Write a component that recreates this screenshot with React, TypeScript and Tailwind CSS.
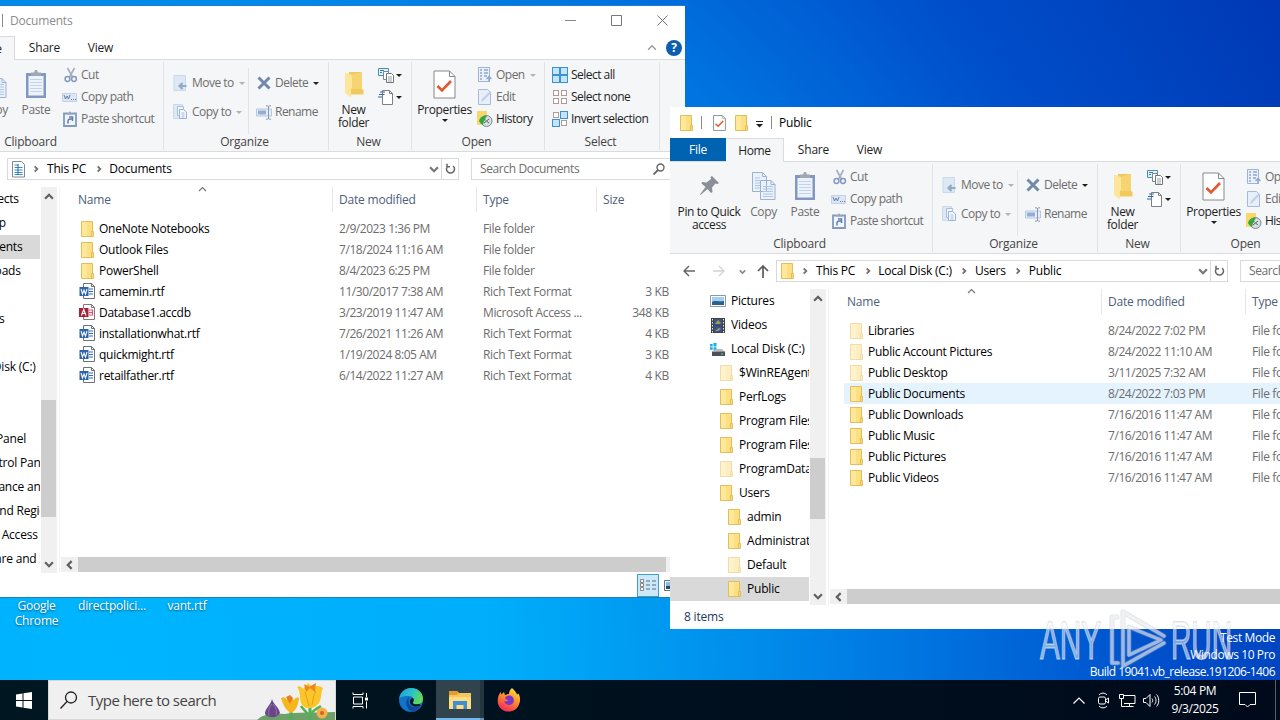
import React from "react";
import clsx from "clsx";

type TreeItem = { label: string; pad: string; icon?: "folder" | "faded" | "pictures" | "videos" | "disk"; selected?: boolean };
type FileItem = { name: string; date: string; type: string; size?: string; icon: "folder" | "faded" | "word" | "access"; hover?: boolean };

const Folder = ({ faded = false }: { faded?: boolean }) => (
  <svg width="13" height="16" viewBox="0 0 13 16" className="shrink-0" opacity={faded ? 0.5 : 1}>
    <path d="M.5.5h11v15H.5z" fill="#fbdf82" stroke="#e5bd55" />
    <path d="M1 1h5v14H1z" fill="#fee89c" />
    <path d="M10.500 10.500h2v5h-2z" fill="#f8d979" stroke="#e0b64c" strokeWidth=".8" />
  </svg>
);

const WordFile = () => (
  <svg width="17" height="17" viewBox="0 0 17 17" className="shrink-0">
    <path d="M4.500.5h8l3 3v12h-11z" fill="#fff" stroke="#6c7178" />
    <path d="M12.500.5v3h3" fill="none" stroke="#6c7178" />
    <path d="M10 6h4M10 8.500h4M10 11h4" stroke="#2b6cb8" />
    <path d="M.5 4h9v9h-9z" fill="#2a62ad" />
    <path d="m2 6 1.500 5L5 7l1.500 4L8 6" fill="none" stroke="#fff" strokeWidth="1.100" />
  </svg>
);

const AccessFile = () => (
  <svg width="17" height="17" viewBox="0 0 17 17" className="shrink-0">
    <path d="M4.500.5h8l3 3v12h-11z" fill="#fff" stroke="#8a7478" />
    <path d="M12.500.5v3h3" fill="none" stroke="#8a7478" />
    <path d="M10 6h3.500v5H10M10 8.500h3" fill="none" stroke="#e0526a" strokeWidth="1.200" />
    <path d="M0 4h9.500v9H0z" fill="#a9203a" />
    <path d="m2.500 11.500 2.200-6 2.300 6M3.300 9.500h3" fill="none" stroke="#fff" strokeWidth="1.200" />
  </svg>
);

const DocumentIcon = () => (
  <svg width="13" height="17" viewBox="0 0 13 17" className="shrink-0">
    <path d="M.5.500h9l3 3v12.500H.5z" fill="#fff" stroke="#7d8a94" />
    <path d="M2.500 4h4M2.500 6.500h8M2.500 9h8M2.500 11.500h8M2.500 13.500h8" stroke="#3a8bc9" strokeWidth="1.200" />
    <path d="M6 3v11" stroke="#1f6fae" />
  </svg>
);

const TreeIcon = ({ icon }: { icon?: TreeItem["icon"] }) => {
  if (icon === "pictures")
    return (
      <svg width="16" height="12" viewBox="0 0 16 12" className="shrink-0">
        <path d="M.5.5h15v11H.5z" fill="#fff" stroke="#8b9aa6" />
        <path d="M2 2h12v8H2z" fill="#9fd1f5" />
        <path d="M2 7c3-2 5 0 12-1v4H2z" fill="#2f6188" />
      </svg>
    );
  if (icon === "videos")
    return (
      <svg width="14" height="15" viewBox="0 0 14 15" className="shrink-0">
        <path d="M0 0h14v15H0z" fill="#3f4246" />
        <path d="M3 1h8v6H3z" fill="#44528c" />
        <path d="M3 8h8v6H3z" fill="#385090" />
        <path d="m4 6 3-4 3 3-2 1zM4 13l4-3 2 1-3 2z" fill="#98a14e" />
        <path d="M1.500 1v14M12.500 1v14" stroke="#e7e7e7" strokeDasharray="1.500 1.500" />
      </svg>
    );
  if (icon === "disk")
    return (
      <svg width="15" height="13" viewBox="0 0 15 13" className="mr-px shrink-0">
        <path d="M0 1h2.700v2.500H0zM3.500 0h3v3.500h-3zM0 4.300h2.700v2.500H0zM3.500 4.300h3v3h-3z" fill="#19b1dc" />
        <path d="m3 8 3-2h6l3 3z" fill="#b9bdc0" />
        <path d="M2 8.500h13V13H2z" fill="#4c5257" />
        <path d="M11 11h2" stroke="#67e07a" />
      </svg>
    );
  return (
    <span className="pl-px">
      <Folder faded={icon === "faded"} />
    </span>
  );
};

const Caret = ({ muted = false }: { muted?: boolean }) => (
  <svg width="6" height="3" viewBox="0 0 6 3" className="shrink-0">
    <path d="M0 0h6L3 3z" fill={muted ? "#b0b3b8" : "#1e1e1e"} />
  </svg>
);

const Chevron = ({ dir, size = 8, color = "#606060", weight = 2 }: { dir: "up" | "down" | "left" | "right"; size?: number; color?: string; weight?: number }) => {
  const paths = { up: "m1 6 3.500-3.500L8 6", down: "m1 3 3.500 3.500L8 3", left: "M6 1 2.500 4.500 6 8", right: "m3 1.500 3 3-3 3" };
  return (
    <svg width={size} height={size} viewBox="0 0 9 9" className="shrink-0">
      <path d={paths[dir]} fill="none" stroke={color} strokeWidth={weight} />
    </svg>
  );
};

const PinIcon = () => (
  <svg width="22" height="22" viewBox="0 0 22 22">
    <path d="m14 1 7 7-1.500 1-2-.5-3.500 4 .5 4.500-1.500 1-3.500-4-7 6-.5-.5 5.500-7.500-4-3.500L4 7l4.500.5 4.500-3.500-.5-2z" fill="#8a8f96" />
  </svg>
);

const CopyIcon = () => (
  <svg width="24" height="28" viewBox="0 0 24 28">
    <path d="M.5.5h10l4 4v15H.5zM8.500 8.500h10.500l4 4v15H8.500z" fill="#e9f1fb" stroke="#9db1d0" />
    <path d="M3 6h5M3 8.500h5M3 11h5M3 13.500h5M3 16h5M11 14.500h10M11 17h10M11 19.500h10M11 22h10M11 24.500h10" stroke="#b0c4e4" />
    <path d="M10.500.5v4h4M19 8.500v4h4" fill="none" stroke="#9db1d0" />
  </svg>
);

const PasteIcon = () => (
  <svg width="22" height="30" viewBox="0 0 22 30">
    <path d="M1 4h20v25H1z" fill="#8298c0" />
    <path d="M3.500 7h15v19.500h-15z" fill="#edf3fc" />
    <path d="M5 10.500h12M5 13.500h12M5 16.500h12M5 19.500h12M5 22.500h12" stroke="#c4d3ea" />
    <path d="M6 3.500h3l1-2.500h2l1 2.500h3V7H6z" fill="#a1a8b3" />
  </svg>
);

const CutIcon = () => (
  <svg width="14" height="16" viewBox="0 0 14 16">
    <path d="m3.500 1 5 9M10.500 1l-5 9" stroke="#a3afc0" strokeWidth="1.600" />
    <circle cx="3.500" cy="12" r="2.400" fill="none" stroke="#8299c0" strokeWidth="1.500" />
    <circle cx="10" cy="12" r="2.400" fill="none" stroke="#8299c0" strokeWidth="1.500" />
  </svg>
);

const CopyPathIcon = () => (
  <svg width="15" height="9" viewBox="0 0 15 9">
    <path d="M.5.5h14v8H.5z" fill="#dbe7f6" stroke="#c2d1e8" />
    <path d="m2 2 1.500 4L5 3l1.500 3L8 2M9 6.500h1M11 6.500h1M13 6.500h1" fill="none" stroke="#6b7fa5" />
  </svg>
);

const ShortcutIcon = () => (
  <svg width="14" height="16" viewBox="0 0 14 16">
    <path d="M1 2.500h12V15H1z" fill="#f1f6fd" stroke="#8399bf" strokeWidth="1.800" />
    <path d="M4 3.500V2h2l.5-1.500h1L8 2h2v1.500z" fill="#98a3b5" />
    <path d="M5 12.500V10c0-1.500 1-2.300 4-2.300M6 6h3.500v4" fill="none" stroke="#5c7db4" strokeWidth="1.500" />
  </svg>
);

const MoveIcon = () => (
  <svg width="14" height="16" viewBox="0 0 14 16">
    <path d="M1 .5h11.500v15H1z" fill="#dde8f5" stroke="#cbd9ec" />
    <path d="M13.500 11H7M9.500 8l-3 3 3 3" fill="none" stroke="#90aac8" strokeWidth="2.200" />
  </svg>
);

const CopyToIcon = () => (
  <svg width="14" height="16" viewBox="0 0 14 16">
    <path d="M.5.5h9v14h-9z" fill="#dde8f5" stroke="#cbd9ec" />
    <path d="M4.500 2.500h6v9h-6z" fill="#eff5fd" stroke="#a9bedb" />
    <path d="M6.500 5.500h4l3 2.500v6.500h-7z" fill="#f3f8fe" stroke="#9ab2d4" />
    <path d="M8.500 9h3M8.500 11h3M8.500 13h3" stroke="#a9bedb" />
  </svg>
);

const DeleteIcon = () => (
  <svg width="14" height="14" viewBox="0 0 14 14">
    <path d="m1.500 1.500 11 11M12.500 1.500l-11 11" stroke="#7189ac" strokeWidth="3" />
  </svg>
);

const RenameIcon = () => (
  <svg width="17" height="15" viewBox="0 0 17 15">
    <path d="M.5 4h15v7H.5z" fill="#e5eef9" stroke="#b3c6e2" />
    <path d="M2 5.500h8v4H2z" fill="#95add2" />
    <path d="M12.500 1.500v12M10 .8c1.500 0 2.500.2 2.500 1 0-.8 1-1 2.500-1M10 14.200c1.500 0 2.500-.2 2.500-1 0 .8 1 1 2.500 1" fill="none" stroke="#8695ad" />
  </svg>
);

const NewFolderIcon = () => (
  <svg width="20" height="27" viewBox="0 0 20 27">
    <path d="M5 1h13v17l1.500 1v4.500H5z" fill="#f1ca5e" />
    <path d="M7 4v14h11V1z" fill="#f6d472" />
    <path d="M1 1.500 8 4v13l-1 1v8.500L1 22z" fill="#fde59a" />
  </svg>
);

const NewItemIcon = () => (
  <svg width="17" height="17" viewBox="0 0 17 17">
    <path d="M.5 1.500h10v7H.5z" fill="#dff1f7" stroke="#4a90a8" />
    <path d="M2 3.500h4M2 5.500h2" stroke="#3a7ab0" />
    <path d="M5.500 4.500h5v8h-5z" fill="#fff" stroke="#7c8890" />
    <path d="M8.500 6.500h5l2 2v7h-7z" fill="#fff" stroke="#6f767c" />
    <path d="M10 10h4M10 12h4M10 14h4" stroke="#9ba1a5" />
  </svg>
);

const EasyAccessIcon = () => (
  <svg width="17" height="17" viewBox="0 0 17 17">
    <path d="M4.500 1.500h7l3 3v11h-10z" fill="#fff" stroke="#7b8084" />
    <path d="M11.500 1.500v3h3" fill="none" stroke="#7b8084" />
    <path d="M2 3h5M1 5.500h5.500M0 8h4" stroke="#2f6aa5" strokeWidth="1.200" />
  </svg>
);

const PropertiesIcon = ({ small = false }: { small?: boolean }) => (
  <svg width={small ? 13 : 23} height={small ? 16 : 29} viewBox="0 0 23 29" preserveAspectRatio="none">
    <path d="M1 1h15.500L22 6.500V28H1z" fill="#fff" stroke="#85898d" strokeWidth={small ? 1.600 : 1} />
    <path d="M16.500 1v5.500H22" fill="none" stroke="#85898d" />
    <path d="m4.500 16 4.500 4.500L18 11" fill="none" stroke="#e4572e" strokeWidth="2.600" />
  </svg>
);

const OpenIcon = () => (
  <svg width="14" height="16" viewBox="0 0 14 16">
    <path d="M.5.5h11v14H.5z" fill="#eaf1fa" stroke="#9fb4d4" />
    <path d="M2 3h2M2 6h2M2 9h2M2 12h2M6 3h4M6 6h4M6 9h3" stroke="#8ea7cf" strokeWidth="1.500" />
    <path d="M11 15v-5M8.500 12 11 9.500l2.500 2.500" fill="none" stroke="#8fa9cd" strokeWidth="1.500" />
  </svg>
);

const EditIcon = () => (
  <svg width="14" height="16" viewBox="0 0 14 16">
    <path d="M.5.5h9l3 3v12H.5z" fill="#e7eff9" stroke="#a7bbd8" />
    <path d="m3 13 1-3 8-8 1.500 1.500-8 8z" fill="#bfd0e9" />
  </svg>
);

const HistoryIcon = () => (
  <svg width="17" height="16" viewBox="0 0 17 16">
    <path d="M1 0h10v13l-10 1z" fill="#f8d768" />
    <circle cx="10.500" cy="10" r="5.500" fill="#d9dee0" stroke="#7d8b8c" />
    <path d="M3 10c1-4 4-6 8-5l-2 3 1 1-2 1-1 4c-2-1-3-2-4-4" fill="#36a543" />
    <path d="m8 12 5-4M10.500 10l2.500 2" stroke="#566" />
  </svg>
);

const SelectIcon = ({ fill }: { fill: [boolean, boolean, boolean, boolean] }) => (
  <svg width="16" height="16" viewBox="0 0 16 16">
    {fill.map((on, i) => {
      const x = (i % 2) * 8;
      const y = i > 1 ? 8 : 0;
      return on ? (
        <rect key={i} x={x + 0.5} y={y + 0.5} width="7" height="7" fill="#c4e5fa" stroke="#3c93cf" />
      ) : (
        <rect key={i} x={x + 1.5} y={y + 1.5} width="5" height="5" fill="#fff" stroke="#b39c93" />
      );
    })}
  </svg>
);

const Small = ({ icon, label, muted, caret }: { icon: React.ReactNode; label: string; muted?: boolean; caret?: "dark" | "muted" }) => (
  <div className={clsx("flex h-[22px] items-center tracking-[-0.52px] whitespace-nowrap", muted ? "text-[#6d6d6d]" : "text-[#1e1e1e]")}>
    <span className="flex w-[19px] shrink-0 justify-start">{icon}</span>
    <span>{label}</span>
    {caret && (
      <span className="ml-[5px]">
        <Caret muted={caret === "muted"} />
      </span>
    )}
  </div>
);

const Big = ({ icon, lines, width, muted, caret }: { icon: React.ReactNode; lines: string[]; width: string; muted?: boolean; caret?: boolean }) => (
  <div className={clsx("flex shrink-0 flex-col items-center tracking-[-0.35px]", width, muted ? "text-[#6d6d6d]" : "text-[#1e1e1e]")}>
    <div className="flex h-[38px] items-center justify-center">{icon}</div>
    {lines.map((line) => (
      <span key={line} className="h-[13px] leading-[13px] whitespace-nowrap">
        {line}
      </span>
    ))}
    {caret && (
      <span className="mt-[3px] flex">
        <Caret />
      </span>
    )}
  </div>
);

const Group = ({ label, width, children }: { label: string; width: string; children: React.ReactNode }) => (
  <div className={clsx("flex h-[88px] shrink-0 flex-col border-r border-[#dfe3e8]", width)}>
    <div className="flex h-[72px] pt-[3px]">{children}</div>
    <div className="pr-[3px] text-center leading-[16px] text-[#444]">{label}</div>
  </div>
);

const Ribbon = () => (
  <div className="flex h-[92px] shrink-0 overflow-hidden border-b border-[#d9dbdd] bg-[#f5f6f7] pt-[2px]">
    <Group label="Clipboard" width="w-[263px]">
      <Big icon={<PinIcon />} lines={["Pin to Quick", "access"]} width="w-[78px]" />
      <Big icon={<CopyIcon />} lines={["Copy"]} width="w-[31px]" muted />
      <Big icon={<PasteIcon />} lines={["Paste"]} width="w-[52px]" muted />
      <div className="-mt-px flex flex-col">
        <Small icon={<span className="pl-[2px]"><CutIcon /></span>} label="Cut" muted />
        <Small icon={<CopyPathIcon />} label="Copy path" muted />
        <Small icon={<span className="pl-px"><ShortcutIcon /></span>} label="Paste shortcut" muted />
      </div>
    </Group>
    <Group label="Organize" width="w-[165px]">
      <div className="mt-[3px] ml-[9px] flex w-[76px] shrink-0 flex-col gap-[7px] border-r border-[#e2e4e7] pt-[4px]">
        <Small icon={<MoveIcon />} label="Move to" muted caret="muted" />
        <Small icon={<CopyToIcon />} label="Copy to" muted caret="muted" />
      </div>
      <div className="mt-[3px] ml-[7px] flex flex-col gap-[7px] pt-[4px]">
        <Small icon={<span className="pl-px"><DeleteIcon /></span>} label="Delete" muted caret="dark" />
        <Small icon={<RenameIcon />} label="Rename" muted />
      </div>
    </Group>
    <Group label="New" width="w-[83px]">
      <Big icon={<NewFolderIcon />} lines={["New", "folder"]} width="w-[49px]" />
      <div className="-mt-px flex flex-col">
        {[<NewItemIcon key="item" />, <EasyAccessIcon key="easy" />].map((icon, i) => (
          <div key={i} className="flex h-[22px] items-center gap-px">
            {icon}
            <Caret />
          </div>
        ))}
      </div>
    </Group>
    <Group label="Open" width="w-[133px]">
      <Big icon={<PropertiesIcon />} lines={["Properties"]} width="w-[65px]" caret />
      <div className="-mt-px flex flex-col">
        <Small icon={<span className="pl-px"><OpenIcon /></span>} label="Open" muted caret="muted" />
        <Small icon={<span className="pl-px"><EditIcon /></span>} label="Edit" muted />
        <Small icon={<span className="-ml-px"><HistoryIcon /></span>} label="History" />
      </div>
    </Group>
    <Group label="Select" width="w-[115px]">
      <div className="-mt-px ml-[7px] flex flex-col">
        <Small icon={<SelectIcon fill={[true, true, true, true]} />} label="Select all" />
        <Small icon={<SelectIcon fill={[false, false, false, false]} />} label="Select none" />
        <Small icon={<SelectIcon fill={[false, true, true, false]} />} label="Invert selection" />
      </div>
    </Group>
  </div>
);

type ExplorerProps = {
  title: string;
  active?: boolean;
  crumbs: string[];
  crumbIcon: React.ReactNode;
  tree: TreeItem[];
  files: FileItem[];
  status: React.ReactNode;
  thumb: string;
  className: string;
};

const Explorer = ({ title, active, crumbs, crumbIcon, tree, files, status, thumb, className }: ExplorerProps) => (
  <div className={clsx("absolute flex w-[784px] flex-col overflow-hidden bg-white", className)}>
    {/* TITLE BAR */}
    <div className="flex h-[31px] shrink-0 items-center pl-[10px]">
      <Folder />
      <div className="ml-[8px] h-[13px] w-px bg-[#8a8a8a]" />
      <div className="ml-[11px]">
        <PropertiesIcon small />
      </div>
      <div className="ml-[9px] flex">
        <Folder />
      </div>
      <svg width="7" height="7" viewBox="0 0 7 7" className="mt-[3px] ml-[8px]">
        <path d="M0 .5h7" stroke="#222" />
        <path d="M0 3h7L3.500 6.500z" fill="#222" />
      </svg>
      <div className="ml-[8px] h-[13px] w-px bg-[#8a8a8a]" />
      <span className={clsx("ml-[7px]", active ? "text-black" : "text-[#8c8c8c]")}>{title}</span>
      <div className="ml-auto flex">
        <div className="flex w-[46px] justify-center">
          <svg width="11" height="11" viewBox="0 0 11 11">
            <path d="M0 5.500h11" stroke="#888" />
          </svg>
        </div>
        <div className="flex w-[46px] justify-center">
          <svg width="11" height="11" viewBox="0 0 11 11">
            <path d="M.5.5h10v10H.5z" fill="none" stroke="#777" />
          </svg>
        </div>
        <div className="flex w-[46px] justify-center">
          <svg width="11" height="11" viewBox="0 0 11 11">
            <path d="m.5.5 10 10M10.500.5l-10 10" stroke="#777" />
          </svg>
        </div>
      </div>
    </div>

    {/* TABS */}
    <div className="flex h-[24px] shrink-0 text-[#1e1e1e]">
      <div className="flex w-[56px] items-center justify-center border-b border-[#dadbdc] bg-[#0063b1] text-white">File</div>
      <div className="flex w-[58px] items-center justify-center border-t border-r border-[#dadbdc] bg-[#f5f6f7] tracking-[-0.35px]">Home</div>
      <div className="flex flex-1 items-center border-b border-[#dadbdc]">
        <span className="w-[59px] text-center">Share</span>
        <span className="w-[53px] text-center">View</span>
        <div className="ml-auto flex items-center gap-[9px] pr-[3px]">
          <Chevron dir="up" size={10} color="#999" weight={1.2} />
          <div className="flex size-[16px] items-center justify-center rounded-full bg-[#0c5fae] text-[12px] leading-none font-bold text-white">?</div>
        </div>
      </div>
    </div>

    <Ribbon />

    {/* ADDRESS BAR */}
    <div className="flex h-[35px] shrink-0 items-center pb-px">
      <div className="flex w-[106px] items-center pl-[13px]">
        <svg width="12" height="12" viewBox="0 0 12 12">
          <path d="M12 6H1M6 1 1 6l5 5" fill="none" stroke="#666" strokeWidth="1.500" />
        </svg>
        <svg width="12" height="12" viewBox="0 0 12 12" className="ml-[18px]">
          <path d="M0 6h11M6 1l5 5-5 5" fill="none" stroke="#d2d2d2" strokeWidth="1.300" />
        </svg>
        <span className="ml-[14px]">
          <Chevron dir="down" size={7} color="#888" />
        </span>
        <svg width="12" height="13" viewBox="0 0 12 13" className="ml-[11px]">
          <path d="M6 13V1M1 6l5-5 5 5" fill="none" stroke="#5a5a5a" strokeWidth="1.700" />
        </svg>
      </div>
      <div className="flex h-[22px] w-[452px] items-center border border-[#d9d9d9] pl-[4px]">
        <span className="flex w-[35px] items-center">
          {crumbIcon}
          <span className="mr-[7px] ml-auto">
            <Chevron dir="right" color="#707070" />
          </span>
        </span>
        {crumbs.map((crumb, i) => (
          <React.Fragment key={crumb}>
            {i > 0 && (
              <span className="flex w-[23px] justify-center pl-[2px]">
                <Chevron dir="right" color="#707070" />
              </span>
            )}
            <span className="text-black">{crumb}</span>
          </React.Fragment>
        ))}
        <span className="mr-[2px] ml-auto">
          <Chevron dir="down" size={10} color="#777" weight={2} />
        </span>
        <span className="flex h-full w-[17px] items-center justify-center border-l border-[#d9d9d9]">
          <svg width="11" height="12" viewBox="0 0 11 12">
            <path d="M3 3a4 4 0 1 0 5 0M2 .800v3h3" fill="none" stroke="#666" strokeWidth="1.500" />
          </svg>
        </span>
      </div>
      <div className="ml-[12px] flex h-[22px] flex-1 items-center border border-[#d9d9d9] pl-[8px] tracking-[-0.38px] text-[#6d6d6d]">
        <span>Search {title}</span>
        <svg width="12" height="12" viewBox="0 0 12 12" className="mr-[19px] ml-auto">
          <circle cx="7.500" cy="4.500" r="3.500" fill="none" stroke="#666" strokeWidth="1.400" />
          <path d="m5 7-4.500 4.500" stroke="#666" strokeWidth="1.800" />
        </svg>
      </div>
    </div>

    <div className="flex min-h-0 flex-1">
      {/* NAVIGATION TREE */}
      <div className="w-[139px] shrink-0 overflow-hidden text-black">
        {tree.map((item, i) => (
          <div key={i} className={clsx("flex h-[24px] items-center gap-[5px] whitespace-nowrap", item.pad, item.selected && "bg-[#d9d9d9]")}>
            <span className="flex w-[16px] shrink-0 justify-center">
              <TreeIcon icon={item.icon} />
            </span>
            <span>{item.label}</span>
          </div>
        ))}
      </div>
      <div className="ml-px flex w-[16px] shrink-0 flex-col items-center bg-[#f0f0f0] py-[4px] pr-px">
        <div className="flex h-[11px] items-center">
          <Chevron dir="up" size={10} />
        </div>
        <div className={clsx("w-[15px] bg-[#cdcdcd]", thumb)} />
        <div className="mt-auto flex">
          <Chevron dir="down" size={10} />
        </div>
      </div>
      <div className="ml-[2px] flex min-w-0 flex-1 flex-col border-l border-[#f2f2f2] pl-px">
        {/* COLUMN HEADERS */}
        <div className="flex h-[25px] shrink-0 items-center text-[#4c607a]">
          <div className="flex h-full w-[272px] items-center border-r border-[#e5e5e5] pl-[17px]">
            <span className="w-[120px]">Name</span>
            <span className="-mt-[20px]">
              <Chevron dir="up" size={9} color="#777" weight={1.2} />
            </span>
          </div>
          <div className="flex h-full w-[144px] items-center border-r border-[#e5e5e5] pl-[6px]">Date modified</div>
          <div className="flex h-full w-[120px] items-center border-r border-[#e5e5e5] pl-[6px]">Type</div>
          <div className="flex h-full items-center pl-[6px]">Size</div>
        </div>
        <div className="mt-[6px] flex flex-col text-[#6d6d6d]">
          {files.map((file) => (
            <div key={file.name} className={clsx("ml-[14px] flex h-[21px] items-center tracking-[-0.35px] whitespace-nowrap", file.hover && "bg-[#e5f3ff]")}>
              <span className="flex w-[24px] shrink-0 pl-[4px]">
                {file.icon === "word" && <WordFile />}
                {file.icon === "access" && <AccessFile />}
                {(file.icon === "folder" || file.icon === "faded") && (
                  <span className="pl-[2px]">
                    <Folder faded={file.icon === "faded"} />
                  </span>
                )}
              </span>
              <span className="w-[240px] shrink-0 tracking-[-0.26px] text-black">{file.name}</span>
              <span className="w-[144px] shrink-0 tracking-[-0.44px]">{file.date}</span>
              <span className="w-[120px] shrink-0">{file.type}</span>
              <span className="w-[66px] shrink-0 text-right">{file.size}</span>
            </div>
          ))}
        </div>
        {/* HORIZONTAL SCROLLBAR */}
        <div className="mt-auto mb-px flex h-[15px] shrink-0 items-center bg-[#f0f0f0] pl-[4px]">
          <Chevron dir="left" size={10} />
          <div className="ml-[3px] h-full w-[588px] shrink-0 bg-[#cdcdcd]" />
        </div>
      </div>
    </div>

    {/* STATUS BAR */}
    <div className="flex h-[24px] shrink-0 items-center text-[#1e395b]">{status}</div>
  </div>
);

const documentsTree: TreeItem[] = [
  { label: "3D Objects", pad: "pl-[38px]" },
  { label: "Desktop", pad: "pl-[39px]" },
  { label: "Documents", pad: "pl-[38px]", selected: true },
  { label: "Downloads", pad: "pl-[38px]" },
  { label: "Music", pad: "pl-[40px]" },
  { label: "Pictures", pad: "pl-[39px]", icon: "pictures" },
  { label: "Videos", pad: "pl-[38px]", icon: "videos" },
  { label: "Local Disk (C:)", pad: "pl-[40px]", icon: "disk" },
  { label: "Libraries", pad: "pl-[24px]" },
  { label: "Network", pad: "pl-[24px]" },
  { label: "Control Panel", pad: "pl-[31px]" },
  { label: "All Control Panel Items", pad: "pl-[39px]" },
  { label: "Appearance and Personalization", pad: "pl-[37px]" },
  { label: "Clock and Region", pad: "pl-[39px]" },
  { label: "Ease of Access", pad: "pl-[38px]" },
  { label: "Hardware and Sound", pad: "pl-[37px]" },
];

const publicTree: TreeItem[] = [
  { label: "Pictures", pad: "pl-[40px]", icon: "pictures" },
  { label: "Videos", pad: "pl-[40px]", icon: "videos" },
  { label: "Local Disk (C:)", pad: "pl-[40px]", icon: "disk" },
  { label: "$WinREAgent", pad: "pl-[48px]", icon: "faded" },
  { label: "PerfLogs", pad: "pl-[48px]", icon: "folder" },
  { label: "Program Files", pad: "pl-[48px]", icon: "folder" },
  { label: "Program Files (x86)", pad: "pl-[48px]", icon: "folder" },
  { label: "ProgramData", pad: "pl-[48px]", icon: "faded" },
  { label: "Users", pad: "pl-[48px]", icon: "folder" },
  { label: "admin", pad: "pl-[56px]", icon: "folder" },
  { label: "Administrator", pad: "pl-[56px]", icon: "folder" },
  { label: "Default", pad: "pl-[56px]", icon: "faded" },
  { label: "Public", pad: "pl-[56px]", icon: "folder", selected: true },
];

const documentsFiles: FileItem[] = [
  { name: "OneNote Notebooks", date: "2/9/2023 1:36 PM", type: "File folder", icon: "folder" },
  { name: "Outlook Files", date: "7/18/2024 11:16 AM", type: "File folder", icon: "folder" },
  { name: "PowerShell", date: "8/4/2023 6:25 PM", type: "File folder", icon: "folder" },
  { name: "camemin.rtf", date: "11/30/2017 7:38 AM", type: "Rich Text Format", size: "3 KB", icon: "word" },
  { name: "Database1.accdb", date: "3/23/2019 11:47 AM", type: "Microsoft Access ...", size: "348 KB", icon: "access" },
  { name: "installationwhat.rtf", date: "7/26/2021 11:26 AM", type: "Rich Text Format", size: "4 KB", icon: "word" },
  { name: "quickmight.rtf", date: "1/19/2024 8:05 AM", type: "Rich Text Format", size: "3 KB", icon: "word" },
  { name: "retailfather.rtf", date: "6/14/2022 11:27 AM", type: "Rich Text Format", size: "4 KB", icon: "word" },
];

const publicFiles: FileItem[] = [
  { name: "Libraries", date: "8/24/2022 7:02 PM", type: "File folder", icon: "faded" },
  { name: "Public Account Pictures", date: "8/24/2022 11:10 AM", type: "File folder", icon: "faded" },
  { name: "Public Desktop", date: "3/11/2025 7:32 AM", type: "File folder", icon: "faded" },
  { name: "Public Documents", date: "8/24/2022 7:03 PM", type: "File folder", icon: "folder", hover: true },
  { name: "Public Downloads", date: "7/16/2016 11:47 AM", type: "File folder", icon: "folder" },
  { name: "Public Music", date: "7/16/2016 11:47 AM", type: "File folder", icon: "folder" },
  { name: "Public Pictures", date: "7/16/2016 11:47 AM", type: "File folder", icon: "folder" },
  { name: "Public Videos", date: "7/16/2016 11:47 AM", type: "File folder", icon: "folder" },
];

const ViewButtons = () => (
  <div className="ml-auto flex h-full items-center pr-[6px]">
    <div className="flex h-[23px] w-[22px] items-center justify-center border border-[#3f9ccb] bg-[#cde8f6]">
      <svg width="16" height="13" viewBox="0 0 16 13">
        <path d="M.5.5h3v3h-3zM.5 4.500h3v3h-3zM.5 8.500h3v3h-3z" fill="#fff" stroke="#888" />
        <path d="M6 2h4M12 2h4M6 6h4M12 6h4M6 10h4M12 10h4" stroke="#55708a" />
      </svg>
    </div>
    <svg width="15" height="11" viewBox="0 0 15 11" className="ml-[5px]">
      <path d="M.5.5h14v10H.5z" fill="#fff" stroke="#5d7388" />
      <path d="M2 2h11v7H2z" fill="#8db9dd" />
      <path d="M2 6h11v3H2z" fill="#284a68" />
    </svg>
  </div>
);

const Watermark = () => (
  <svg width="196" height="66" viewBox="0 0 196 66" className="absolute top-[607px] left-[1038px]">
    <g fontFamily="Liberation Sans Narrow, Liberation Sans, sans-serif" fontSize="53" letterSpacing="0" fill="#ffffff" fillOpacity=".5" stroke="#c3cad8" strokeOpacity=".65" strokeWidth="1.600" paintOrder="stroke">
      <text x="2" y="52" textLength="61" lengthAdjust="spacingAndGlyphs">ANY</text>
      <text x="133" y="52" textLength="61" lengthAdjust="spacingAndGlyphs">RUN</text>
    </g>
    <g fill="none" strokeLinejoin="round" strokeLinecap="round">
      <path d="M79 10h-5v46h6M85 59V5l41 24M85 59l41-23M91 48V20l32 13z" stroke="#a6acb8" strokeOpacity=".35" strokeWidth="5" />
      <path d="M79 10h-5v46h6M85 59V5l41 24M85 59l41-23M91 48V20l32 13z" stroke="#ffffff" strokeOpacity=".5" strokeWidth="3.500" />
    </g>
  </svg>
);

const Crocuses = () => (
  <svg width="78" height="40" viewBox="0 0 78 40">
    <path d="M0 40c6-6 14-7 28-6 12-2 30-1 52-2v8z" fill="#6fa069" />
    <path d="M34 40V27M53 40V26" stroke="#4fae55" strokeWidth="3" />
    <path d="M53 36c2-6 8-8 11-10M52 36c-4-6-7-8-8-10" stroke="#55b157" strokeWidth="2.500" fill="none" />
    <path d="M15 19c1 5 7 8 8 14-3 5-11 6-15 1 0-6 6-9 7-15" fill="#6a4587" />
    <path d="M15 24c-3 3-4 7-3 12M16 24c3 3 4 7 3 11" stroke="#9874b3" fill="none" />
    <path d="M24 18c3-2 5 0 6 2l3-4 4 4c1-2 3-3 5-2-1 7-2 12-8 15-6-3-8-9-10-15" fill="#f6b71e" />
    <path d="M29 17l4-2 3 3-3 6z" fill="#e97f21" />
    <path d="M40 7c3-2 5 0 6 2l5-6 6 5c3-3 6-2 9 0-3 5 0 13-7 18-4 3-10 3-13 0-5-5-1-13-6-19" fill="#fbc62a" />
    <path d="M47 4l5 3 7-4-1 9-5-4-4 4z" fill="#ec8722" />
    <path d="M48 12c2 5 2 8 4 14M59 11c-3 5-3 9-4 14" stroke="#e99c16" fill="none" />
    <circle cx="65" cy="33" r="5.500" fill="#f6b24a" />
    <circle cx="65" cy="33" r="2" fill="#cf6722" />
  </svg>
);

const Taskbar = () => (
  <div className="absolute bottom-0 left-0 flex h-[40px] w-[1280px] items-center bg-linear-to-r from-[#001721] to-[#000a1b] text-white">
    <div className="flex w-[48px] justify-center">
      <svg width="16" height="17" viewBox="0 0 16 17" fill="#fff">
        <path d="m0 2.500 6.500-1V8H0zM7.500 1.300 16 0v8H7.500zM0 9h6.500v6.500L0 14.500zM7.500 9H16v8l-8.500-1.300z" />
      </svg>
    </div>
    <div className="flex h-full w-[288px] items-center border border-[#d8d8d8] bg-[#f0f0f0] pl-[11px]">
      <svg width="18" height="18" viewBox="0 0 18 18">
        <circle cx="11" cy="6.500" r="5.500" fill="none" stroke="#222" strokeWidth="1.300" />
        <path d="m7 10.500-6.500 7" stroke="#222" strokeWidth="1.300" />
      </svg>
      <span className="ml-[10px] text-[15px] tracking-[-0.52px] text-[#444]">Type here to search</span>
      <span className="ml-auto">
        <Crocuses />
      </span>
    </div>
    <div className="flex w-[48px] justify-center">
      <svg width="17" height="17" viewBox="0 0 17 17" fill="none" stroke="#fff">
        <path d="M1 .500v2h10v-2M1 16.500v-2h10v2M1.500 5h9v7h-9zM14.500 1v4M14.500 9.500v7" />
        <path d="M13 5.500h3v3h-3z" fill="#fff" stroke="none" />
      </svg>
    </div>
    <div className="flex w-[52px] justify-center pl-[2px]">
      <svg width="24" height="24" viewBox="0 0 24 24">
        <defs>
          <linearGradient id="edge-top" x1="0" y1="0" x2="1" y2="0.400">
            <stop offset="0" stopColor="#1c9fe0" />
            <stop offset=".6" stopColor="#2cc4c4" />
            <stop offset="1" stopColor="#62d957" />
          </linearGradient>
        </defs>
        <circle cx="12" cy="12" r="12" fill="#1173c9" />
        <path d="M.3 10C1.500 4 6.500 0 12 0c7 0 12 5 12 10.500 0 4-3 6-6.500 6-3 0-4-1.500-3.500-2.300 1.500-2 .5-6.200-4-6.200C5.500 7.500 1.500 9 .3 10" fill="url(#edge-top)" />
        <path d="M10 9c-4 3-3.500 11 2 14.500 4 0 8-2.500 9.500-5.500-5 2.500-10 1-11.500-2.500-1-2.500 0-5 0-6.500" fill="#0d4a94" />
        <path d="M14 14.200c1-1.200 1-3-.2-4.500-2 .5-3.300 2.500-2.800 5 .8 3.300 6 5.300 10.800 2.800l-1.500-1.700c-3 1.200-7.300.4-6.300-1.600" fill="#001721" />
      </svg>
    </div>
    <div className="flex h-full w-[44px] items-center justify-center border-b-2 border-[#76b9ed] bg-[#31444d] pl-[3px]">
      <svg width="22" height="19" viewBox="0 0 22 19">
        <path d="M0 1h8l2 2h12v16H0z" fill="#f5c65b" />
        <path d="M0 1h8l1.500 2L8 5H0z" fill="#e39b2e" />
        <path d="M0 7h22v12H0z" fill="#ffdc7e" />
        <path d="M4 19v-8h14v8h-3.500v-4h-7v4z" fill="#3c8fd6" />
      </svg>
    </div>
    <div className="h-full w-[4px] border-b-2 border-[#5f94bd] bg-[#24363f]" />
    <div className="flex w-[50px] justify-center">
      <svg width="24" height="24" viewBox="0 0 24 24">
        <defs>
          <linearGradient id="fox" x1="0.800" y1="0" x2="0.300" y2="1">
            <stop offset="0" stopColor="#ffe64a" />
            <stop offset=".45" stopColor="#ff9128" />
            <stop offset="1" stopColor="#f5265f" />
          </linearGradient>
        </defs>
        <path d="M15 0c2 2 4 3.500 5 6.500l1.500-1c2 3.500 2 7.500.5 11-2 5-6 7-10.500 7C5 23.500.5 18.500.7 12.500c0-3 1-6 3-8.500l.8 2.500L7 4l1 3c1.500-.5 3-1 4-1 0-2.500 1-4.500 3-6" fill="url(#fox)" />
        <path d="M8 10c1-3 6-3.500 8-.5 2.500 4-.5 7.500-4 7.500-3 0-5-2-4.500-4 1 .7 3 .5 4-.8-1.500 0-3-.7-3.500-2.200" fill="#7a35c9" />
      </svg>
    </div>

    {/* TRAY */}
    <div className="ml-auto flex h-full items-center">
      <svg width="12" height="7" viewBox="0 0 12 7" fill="none" stroke="#fff" strokeWidth="1.200">
        <path d="m.5 6.500 5.500-5.500 5.500 5.500" />
      </svg>
      <svg width="13" height="17" viewBox="0 0 13 17" fill="none" stroke="#fff" className="ml-[12px]">
        <rect x="1.500" y="5" width="7" height="7" rx="1.500" />
        <path d="m8.500 8 3-2v5l-3-2M2 3c2-2.500 6-2.500 8 0M2 14c2 2.500 6 2.500 8 0" />
      </svg>
      <svg width="17" height="15" viewBox="0 0 17 15" fill="none" stroke="#fff" className="ml-[9px]">
        <path d="M5 2.500h11v8H5M10.500 10.500v3M6.500 13.500h8M.5 1.500h4v4h-4zM2.500 5.500v8h4" />
      </svg>
      <svg width="17" height="15" viewBox="0 0 17 15" fill="none" stroke="#fff" className="ml-[7px]">
        <path d="M.5 5.500h2.500l4-4v12l-4-4H.5zM9 5.500c1 1.200 1 2.800 0 4M11.500 3.500c2 2 2 6 0 8M13.500 1.500c3 3 3 9 0 12" />
      </svg>
      <div className="flex w-[70px] flex-col items-center text-[12px] leading-[18px] tracking-[-0.35px]">
        <span>5:04 PM</span>
        <span>9/3/2025</span>
      </div>
      <svg width="17" height="16" viewBox="0 0 17 16" fill="none" stroke="#fff" className="ml-[9px]">
        <path d="M.5.5h16v12h-5.500l-2.500 2.500-2.500-2.500H.5z" />
      </svg>
      <div className="ml-[19px] h-full w-px bg-[#55606b]" />
      <div className="w-[4px]" />
    </div>
  </div>
);

const App = () => (
  <div className="relative h-[720px] w-[1280px] overflow-hidden bg-[radial-gradient(circle_at_100px_660px,#00b5ff_0px,#00adfa_400px,#0094ee_600px,#0070de_850px,#004fcb_1060px,#0038b4_1350px)] font-['Open_Sans','Noto_Sans',sans-serif] text-[12px] tracking-[-0.2px]">
    {/* DESKTOP LABELS */}
    <div className="absolute top-[598px] left-[-1px] flex text-center leading-[15px] text-white [text-shadow:0_1px_2px_rgba(0,0,0,0.5)]">
      <span className="w-[75px] px-[12px]">Google Chrome</span>
      <span className="w-[76px]">directpolici...</span>
      <span className="w-[74px]">vant.rtf</span>
    </div>

    <Explorer
      title="Documents"
      crumbs={["This PC", "Documents"]}
      crumbIcon={<DocumentIcon />}
      tree={documentsTree}
      files={documentsFiles}
      status={<ViewButtons />}
      thumb="mt-[198px] h-[117px]"
      className="top-[5px] left-[-99px] h-[592px] shadow-[inset_0_1px_0_#1f7fc8,0_1px_0_#1a7fb8]"
    />
    <Explorer
      title="Public"
      active
      crumbs={["This PC", "Local Disk (C:)", "Users", "Public"]}
      crumbIcon={<Folder />}
      tree={publicTree}
      files={publicFiles}
      status={<span className="pl-[14px]">8 items</span>}
      thumb="mt-[154px] h-[61px]"
      className="top-[107px] left-[670px] h-[522px]"
    />

    <div className="absolute top-[629px] right-[5px] flex flex-col text-right leading-[17px] tracking-[-0.4px] text-white">
      <span>Test Mode</span>
      <span>Windows 10 Pro</span>
      <span className="tracking-[-0.55px]">Build 19041.vb_release.191206-1406</span>
    </div>
    <Watermark />
    <Taskbar />
  </div>
);

export default App;
